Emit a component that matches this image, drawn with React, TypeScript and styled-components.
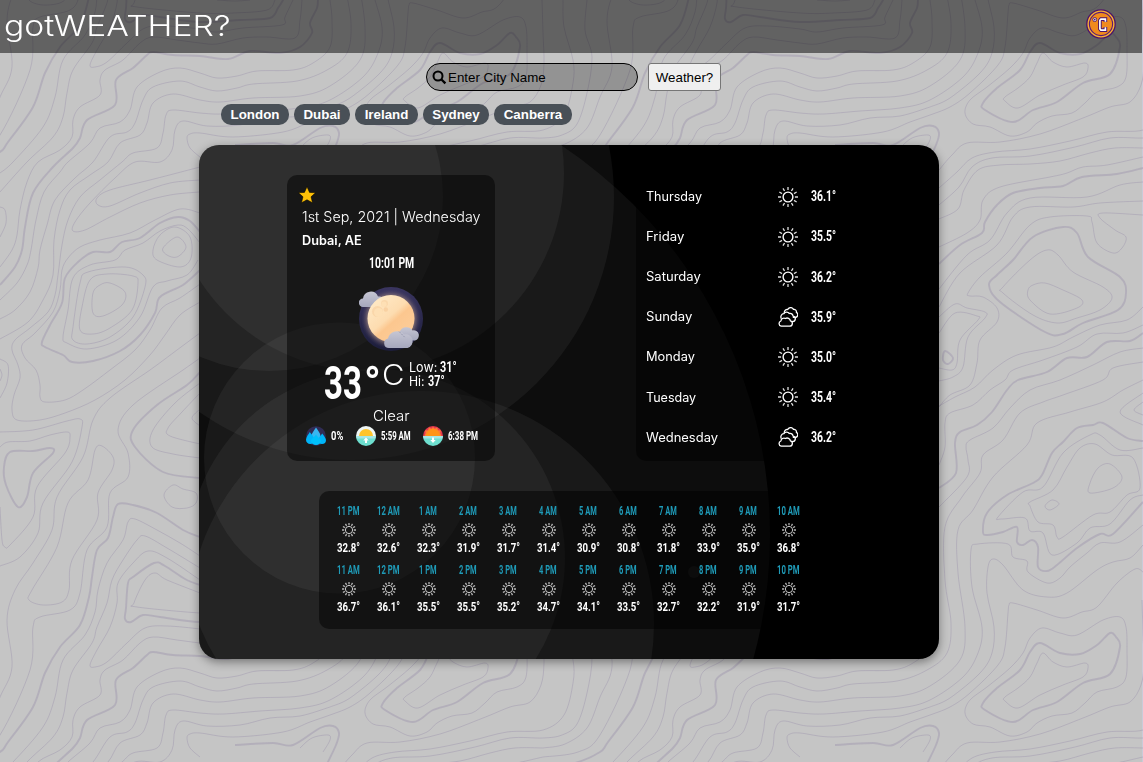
import React, { useLayoutEffect, useRef, useState } from "react";
import styled, { createGlobalStyle } from "styled-components";

const GlobalStyle = createGlobalStyle`
  * { box-sizing: border-box; }
  html, body { margin: 0; padding: 0; height: 100%; overflow: hidden; }
  body { background: #c5c5c5; font-family: "Liberation Sans", Arial, sans-serif; }
`;

/* ---------- topographic backdrop ---------- */

type Contour = { d: string; closed?: boolean; bold?: boolean };

const smooth = (points: string, closed?: boolean) => {
  const p = points.trim().split(/\s+/).map((s) => s.split(",").map(Number));
  const n = p.length;
  const at = (i: number) => (closed ? p[(i + n) % n] : p[Math.max(0, Math.min(n - 1, i))]);
  let d = `M${p[0][0]} ${p[0][1]}`;
  for (let i = 0; i < (closed ? n : n - 1); i++) {
    const [a, b, c, e] = [at(i - 1), at(i), at(i + 1), at(i + 2)];
    const f = (v: number) => v.toFixed(1);
    d += `C${f(b[0] + (c[0] - a[0]) / 6)} ${f(b[1] + (c[1] - a[1]) / 6)} ${f(c[0] - (e[0] - b[0]) / 6)} ${f(c[1] - (e[1] - b[1]) / 6)} ${c[0]} ${c[1]}`;
  }
  return closed ? d + "Z" : d;
};

const contours: Contour[] = [
  { bold: true, d: "200,-15 185,-21 165,-34 154,-37 133,-23 128,-17 126,8 125,19 131,22 143,15 160,17 200,22 240,20 270,18 278,8 283,0 287,-10" },
  { bold: true, d: "320,-10 318,0 317,8 310,23 312,33 300,47 280,53 250,51 228,59 200,56 173,55 153,52 147,55 133,68 116,80 115,105 87,120 80,138 73,148 53,167 33,193 25,227 22,250 15,267 0,285" },
  { bold: true, d: "-57,168 -25,163 0,152 8,142 33,107 45,73 60,47 80,25 89,-3 92,-23 97,-50 108,-62 113,-83 118,-96 133,-95 157,-87 183,-70 200,-63" },
  { bold: true, closed: true, d: "440,43 430,52 420,70 397,88 383,103 385,110 413,122 433,110 457,102 483,83 510,74 520,47 516,37 510,33 497,45 480,54 460,53" },
  { closed: true, d: "443,53 437,63 430,77 418,88 405,97 405,101 418,108 440,95 463,85 483,77 488,68 485,63 467,67 453,62" },
  { closed: true, d: "520,17 503,20 477,35 460,33 442,28 430,38 423,53 410,68 387,87 370,100 365,113 373,124 390,127 410,136 427,132 437,123 452,116 472,113 485,103 497,92 517,87 526,77 527,50 526,27" },
  { d: "200,157 190,148 187,138 190,134 200,133 233,137 283,132 310,122 330,115 350,107 370,93 398,65 405,47 408,13 409,5 413,3 437,10 463,18 482,12 497,7 517,-17 535,-31 543,-28" },
  { d: "330,107 350,98 380,73 392,53 394,27 387,-7 388,-33 393,-41 403,-35 423,-10 447,-3 467,-7 497,-30 513,-38 530,-42 543,-55" },
  { d: "330,107 300,116 270,118 240,125 207,126 183,121 175,130 172,150 160,162 135,162 115,178 90,203 75,222 73,231 85,230 110,217 140,203 170,195 199,192" },
  { d: "543,-75 520,-58 500,-57 487,-47 470,-33 460,-22 447,-17 428,-28 427,-39 413,-43 408,-56 378,-56 371,-50 372,-13 382,27 378,53 363,77 330,100 300,108 260,111 223,114 200,113 173,110 166,115 163,133 157,148 133,153 122,162 100,180 80,197 68,220 62,245 58,275 55,295 48,312 30,328 15,340 12,350 18,365 20,378 14,395 12,410 17,420 40,420 65,413 95,400 125,380 150,355 165,335 180,315 200,302" },
  { d: "543,-220 523,-210 503,-198 470,-188 437,-177 427,-155 393,-123 373,-90 358,-70 358,-27 365,27 360,60 330,86 300,96 253,98 220,102 200,100 173,94 153,103 147,123 140,135 120,143 108,162 90,175 70,190 60,210 54,240 53,275 43,300 28,322 0,339" },
  { d: "543,-238 513,-232 503,-220 463,-205 443,-198 420,-187 403,-160 383,-145 380,-127 362,-103 345,-73 345,-20 351,23 347,53 327,70 297,81 253,84 237,88 217,91 200,87 180,81 153,87 143,100 135,123 127,132 110,137 93,162 75,178 55,200 47,225 40,250 38,268 30,292 15,310 0,319" },
  { d: "330,0 332,20 330,47 313,63 293,70 257,71 237,76 217,78 200,73 180,68 160,72 137,87 130,110 120,122 100,128 90,143 68,162 60,172 44,192 36,220 31,250 27,265 17,283 0,300" },
  { d: "302,0 300,20 295,38 267,37 243,38 217,44 200,43 177,40 153,37 140,43 123,60 105,70 100,80 100,95 80,107 73,120 72,137 60,150 38,162 27,182 20,210 17,235 12,250 0,267" },
  { d: "293,0 285,17 282,25 243,28 217,32 200,29 167,26 145,28 127,43 107,62 95,67 90,65 97,50 110,27 117,3 118,-17 133,-37 148,-49 167,-42 200,-20" },
  { d: "200,-44 180,-57 157,-70 135,-81 128,-78 123,-60 107,-37 98,-10 95,12 85,35 63,60 55,97 43,127 13,162 0,173" },
  { d: "200,-32 167,-52 145,-64 137,-60 123,-40 112,-20 107,3 97,27 92,43 73,70 67,93 63,117 53,137 27,162 0,192" },
  { d: "275,0 267,10 233,13 200,13 137,7 134,3 145,-20 155,-27 167,-20 200,-7" },
  { d: "217,0 235,1 250,0" },
  { d: "200,333 173,353 150,370 110,398 93,420 83,457 57,497 52,530 33,563 15,590 7,620 12,667 0,697 -13,728 -35,744 -57,748" },
  { d: "200,358 183,370 133,405 118,430 128,453 128,477 110,493 107,527 87,550 80,593 70,610 40,617 33,627 30,670 0,735 -22,752 -57,757" },
  { closed: true, d: "102,446 113,457 112,470 98,493 97,520 72,560 69,590 62,602 43,605 29,600 32,590 57,547 68,503 88,480 95,450" },
  { d: "0,447 8,442 30,441 50,435 67,432 70,437 65,453 37,487 33,517 10,545 5,547 2,540 0,507" },
  { d: "0,432 33,430 67,421 80,419 82,427 72,462 43,503 38,533 20,557 0,566" },
  { bold: true, closed: true, d: "10,452 33,451 50,448 53,453 33,473 27,497 18,507 6,485 4,467" },
  { d: "0,359 8,365 7,383 0,398" },
  { d: "0,369 2,375 0,381" },
  { d: "0,207 5,210 6,223 0,237" },
  { bold: true, d: "200,232 190,221 178,217 160,223 140,238 122,242 110,252 93,252 78,262 65,278 62,303 50,325 42,342 45,347 63,355 72,362 93,361 120,351 140,335 155,313 160,297 183,285 200,270" },
  { d: "200,213 180,209 155,220 130,233 100,240 80,247 68,258 62,270 60,290 53,312 35,333 22,345 25,358 36,370 40,385 40,397 45,402 65,400 83,390 110,370 135,350 150,330 162,308 180,298 200,284" },
  { d: "200,243 188,229 178,225 160,231 143,243 125,250 115,260 90,265 73,278 68,310 63,337 67,343 87,349 117,340 140,317 153,287 167,281 187,275 198,260" },
  { closed: true, d: "125,267 143,275 145,287 133,317 110,337 87,344 73,340 73,327 80,283 88,272" },
  { closed: true, d: "133,276 138,283 132,310 110,328 93,334 80,330 82,307 90,280 107,274" },
  { closed: true, d: "110,283 125,292 122,305 103,316 93,313 93,293 100,285" },
  { closed: true, d: "177,237 186,247 177,257 167,255 163,248" },
  { closed: true, d: "175,227 190,237 191,258 180,267 157,260 153,250 160,235" },
  { d: "200,167 150,180 110,190 97,198 98,205 110,206 140,193 170,183 200,180" },
  { bold: true, d: "200,372 187,385 157,405 133,430 135,447 163,472 200,478" },
  { d: "200,383 175,403 153,430 152,447 173,454 200,458" },
  { d: "200,393 182,412 168,428 170,436 200,444" },
  { d: "200,409 192,418 200,426" },
  { closed: true, d: "173,485 183,489 196,493 196,503 187,508 172,507 164,495" },
  { bold: true, d: "235,145 273,143 293,145 320,128 333,126 339,133 336,145 325,168" },
  { d: "300,148 312,138 328,135 330,140 323,152" },
  { d: "542,0 543,33 544,63 541,85 530,102 510,107 483,118 440,134 400,142 367,143 352,155 339,170" },
  { d: "563,0 564,27 573,60 573,83 564,115 543,130 507,132 470,141 430,149 395,152 372,158 357,172 339,188" },
  { d: "587,0 585,30 592,57 587,93 577,124 562,135 543,138 510,138 475,147 430,156 392,158 372,167 359,187 339,205" },
  { d: "543,148 515,148 490,153 460,161 430,164 400,165 378,170 364,190 358,209 339,219" },
  { d: "543,157 507,165 483,167 467,173 450,177 400,187 383,200 380,220 367,233 339,247" },
  { bold: true, d: "543,168 517,174 482,177 463,186 440,188 413,193 397,205 385,222 382,233 360,245 339,264" },
  { d: "543,182 520,185 487,197 430,198 407,213 390,240 367,255 339,289" },
  { d: "543,201 500,203 473,207 430,207 413,217 397,245 360,273 339,307" },
  { d: "543,215 503,213 500,218 515,230 526,237 522,248 513,253 497,243 492,222 487,216 450,217 430,225 407,253 380,277 368,293 370,296 383,297 397,308 397,322 380,340 377,363 370,385 350,395 339,407" },
  { bold: true, closed: true, d: "463,227 477,233 488,257 520,277 526,293 518,310 483,323 463,334 445,332 400,302 389,285 397,275 413,260 433,237" },
  { closed: true, d: "447,250 458,255 473,272 503,287 512,298 500,310 477,318 457,323 433,315 403,293 403,287 430,260" },
  { closed: true, d: "445,283 463,290 482,300 477,308 450,314 430,300 428,290 433,285" },
  { d: "339,317 355,304 367,308 385,312 385,318 368,337 363,367 353,377 339,381" },
  { d: "339,333 355,313 377,316 378,320 360,340 357,363 352,370 339,368" },
  { bold: true, closed: true, d: "345,351 353,358 348,364 343,360" },
  { d: "543,307 527,320 500,325 473,337 453,347 417,355 393,370 375,387 355,397 339,406" },
  { d: "543,325 523,333 497,334 477,347 443,360 413,370 405,380 390,390 373,405 350,413 345,423 345,447 339,465" },
  { bold: true, d: "543,333 530,341 507,342 487,357 467,358 447,372 418,380 407,390 392,412 377,425 360,432 355,443 356,473 339,488" },
  { d: "543,348 520,352 493,365 460,380 430,390 410,408 393,428 370,440 366,447 368,460 367,477 339,507" },
  { bold: true, d: "543,441 527,438 503,423 493,425 477,428 463,442 452,453 442,475 433,483 407,495 387,513 383,532 388,535 403,532 417,527 417,542 423,545 432,540 438,547 438,567 447,571 457,565 477,548 500,534 513,534 543,502" },
  { d: "543,448 520,450 500,435 490,435 463,453 443,487 423,492 398,517 402,519 425,518 430,531 443,533 452,555 477,543 490,528 510,524 530,500 543,495" },
  { closed: true, d: "533,458 512,455 495,444 480,448 467,467 453,490 430,502 430,506 438,522 453,525 457,537 463,537 493,515 510,512 527,495 540,488" },
  { closed: true, d: "510,464 522,477 513,488 490,493 490,483 498,468" },
  { closed: true, d: "452,500 459,504 450,510 445,506" },
  { d: "543,393 520,412 543,425" },
  { d: "543,402 534,410 543,415" },
];

const BackdropSvg = styled.svg`
  position: absolute;
  inset: 0;
  z-index: -1;
`;

const Backdrop = () => (
  <BackdropSvg width="1143" height="762" fill="none" stroke="#9c92ac" strokeOpacity="0.42">
    <defs>
      <g id="contours">
        {contours.map((c, i) => (
          <path key={i} d={smooth(c.d, c.closed)} strokeWidth={c.bold ? 1.9 : 1} />
        ))}
      </g>
    </defs>
    {[0, 600].map((x) => [-600, 0, 600].map((y) => <use key={`${x}-${y}`} href="#contours" x={x} y={y} />))}
  </BackdropSvg>
);

/* ---------- text fitted to a set width ---------- */

const FitBox = styled.span<{ $w: number }>`
  display: inline-block;
  flex: none;
  width: ${(p) => p.$w}px;
  white-space: nowrap;
  text-align: left;
`;
const FitInner = styled.span`
  display: inline-block;
  transform-origin: 0 50%;
`;

const Fit = ({ w, children, className }: { w: number; children: React.ReactNode; className?: string }) => {
  const ref = useRef<HTMLSpanElement>(null);
  const [scale, setScale] = useState(1);
  useLayoutEffect(() => {
    if (ref.current) setScale(w / ref.current.offsetWidth);
  }, [w]);
  return (
    <FitBox $w={w} className={className}>
      <FitInner ref={ref} style={{ transform: `scaleX(${scale})` }}>{children}</FitInner>
    </FitBox>
  );
};

const Condensed = styled(Fit)<{ $size: number }>`
  font-family: Roboto, sans-serif;
  font-weight: 700;
  font-size: ${(p) => p.$size}px;
  line-height: 1.1;
`;
const Rounded = styled(Fit)<{ $size: number; $weight?: number }>`
  font-family: Inter, sans-serif;
  font-weight: ${(p) => p.$weight ?? 400};
  font-size: ${(p) => p.$size}px;
  line-height: 1.2;
`;

/* ---------- page ---------- */

const Page = styled.div`
  position: relative;
  z-index: 0;
  width: 100vw;
  height: 762px;
  border-right: 1px solid #c9cbd9;
`;
const Header = styled.header`
  display: flex;
  align-items: center;
  justify-content: space-between;
  height: 53px;
  padding: 0 26px 5px 4px;
  background: rgba(0, 0, 0, 0.5);
  color: #fff;
`;
const Brand = styled.div`
  display: flex;
  padding-top: 4px;
`;
const SearchRow = styled.form`
  display: flex;
  gap: 10px;
  margin: 10px 0 0 426px;
  height: 28px;
`;
const SearchBox = styled.label`
  display: flex;
  align-items: center;
  width: 212px;
  padding-left: 5px;
  border: 1px solid #000;
  border-radius: 14px;
  background: rgba(0, 0, 0, 0.25);
`;
const SearchInput = styled.input`
  width: 180px;
  padding: 0;
  margin-left: 1px;
  border: 0;
  outline: 0;
  background: transparent;
  font: 13.333px "Liberation Sans", Arial, sans-serif;
  &::placeholder { color: #000; opacity: 1; }
`;
const SearchButton = styled.button`
  width: 73px;
  padding: 0;
  border: 1px solid #767676;
  border-radius: 3px;
  background: #efefef;
  color: #000;
  font: 13.333px "Liberation Sans", Arial, sans-serif;
`;
const Chips = styled.div`
  display: flex;
  gap: 5px;
  margin: 13px 0 0 221px;
`;
const Chip = styled.button<{ $w: number }>`
  width: ${(p) => p.$w}px;
  height: 21px;
  padding: 0;
  border: 0;
  border-radius: 10px;
  background: #495057;
  color: #fff;
  font: bold 13.333px "Liberation Sans", Arial, sans-serif;
`;

const Card = styled.main`
  position: relative;
  z-index: 0;
  width: 740px;
  height: 514px;
  margin: 20px 0 0 199px;
  padding: 30px 88px;
  overflow: hidden;
  border-radius: 20px;
  background: #000;
  color: #fff;
`;
const CardShadow = styled.div`
  display: flow-root;
  filter: drop-shadow(0 3px 5px rgba(0, 0, 0, 0.4));
`;
const CardArt = styled.svg`
  position: absolute;
  inset: 0;
  z-index: -1;
`;
const TopPanels = styled.div`
  display: flex;
  justify-content: space-between;
`;
const Panel = styled.section`
  border-radius: 10px;
  background: rgba(0, 0, 0, 0.5);
`;
const Today = styled(Panel)`
  display: flex;
  flex-direction: column;
  width: 208px;
  height: 286px;
  padding: 11px 15px 0;
`;
const StarIcon = styled.svg`
  margin-left: -4px;
  flex: none;
`;
const Line = styled.div<{ $h: number; $center?: boolean }>`
  display: flex;
  align-items: center;
  justify-content: ${(p) => (p.$center ? "center" : "flex-start")};
  flex: none;
  height: ${(p) => p.$h}px;
`;
const MoonSlot = styled.div`
  display: flex;
  justify-content: center;
  margin-top: 9px;
`;
const TempRow = styled.div`
  display: flex;
  align-items: flex-start;
  height: 54px;
  padding: 7px 0 0 22px;
`;
const BigDegree = styled.div`
  display: flex;
  margin-left: 2px;
`;
const UnitLetter = styled.div`
  margin: 1px 0 0 1px;
`;
const Range = styled.div`
  display: flex;
  flex-direction: column;
  margin: 3px 0 0 5px;
`;
const RangeLine = styled.div`
  display: flex;
  align-items: center;
  gap: 3px;
  height: 14px;
`;
const Facts = styled.div`
  display: flex;
  align-items: center;
  height: 20px;
  margin: 0 -10px 0 4px;
`;
const Fact = styled.div<{ $w: number }>`
  display: flex;
  align-items: center;
  gap: 5px;
  width: ${(p) => p.$w}px;
`;
const Week = styled(Panel)`
  display: flex;
  flex-direction: column;
  width: 215px;
  height: 286px;
  padding: 1.5px 10px 0;
`;
const DayRow = styled.div`
  display: grid;
  grid-template-columns: 132px 33px 30px;
  align-items: center;
  height: 40.15px;
`;
const Hours = styled(Panel)`
  display: grid;
  grid-template-columns: repeat(12, 40px);
  grid-auto-rows: 59px;
  width: 500px;
  height: 138px;
  margin: 30px 0 0 32px;
  padding: 14px 10px 0 9px;
`;
const Hour = styled.div`
  display: flex;
  flex-direction: column;
  align-items: center;
`;
const HourLabel = styled.div`
  display: flex;
  height: 18px;
  color: #1f9bb8;
`;
const HourTemp = styled.div`
  display: flex;
  margin-top: 4px;
`;
const HourIcon = styled.div`
  display: flex;
  padding-left: 1px;
`;

/* ---------- icons ---------- */

const rays = (r1: number, r2: number) =>
  Array.from({ length: 12 }, (_, i) => {
    const a = (i * Math.PI) / 6;
    const f = (v: number) => (10 + v).toFixed(2);
    return `M${f(r1 * Math.cos(a))} ${f(r1 * Math.sin(a))}L${f(r2 * Math.cos(a))} ${f(r2 * Math.sin(a))}`;
  }).join("");

const Sun = ({ size }: { size: number }) => (
  <svg width={size} height={size} viewBox="0 0 20 20" fill="none" stroke="#fff">
    <circle cx="10" cy="10" r={size < 20 ? 5.2 : 4.9} strokeWidth="1.4" opacity={size < 20 ? 0.8 : 1} />
    <path d={rays(6.9, 10)} strokeWidth={size < 20 ? 1.8 : 1.35} opacity={size < 20 ? 0.7 : 0.85} />
  </svg>
);

const Clouds = () => (
  <svg width="20" height="20" viewBox="0 0 20 20" fill="none" stroke="#fff" strokeWidth="1.3" strokeLinejoin="round" strokeLinecap="round">
    <path d="M3.2 19.2H11.600a2.700 2.700 0 0 0 .8-5.3 3.300 3.300 0 0 0-5-2.400 3.100 3.100 0 0 0-4.500 2.500A2.700 2.700 0 0 0 3.200 19.200Z" />
    <path d="M3.100 11.300a3.300 3.300 0 0 1 2.800-4.600 3.300 3.300 0 0 1 5.400-.2 2.800 2.800 0 0 1 3.700 2.600 2.700 2.700 0 0 1-.8 5.400" />
    <path d="M6.300 5.600A3 3 0 0 1 9.700 2.500a3.200 3.200 0 0 1 5.800-.1 2.500 2.500 0 0 1 2.900 3 2.600 2.600 0 0 1-1.300 4.900H15.300" />
  </svg>
);

const Unit = () => (
  <svg width="30" height="30" viewBox="0 0 30 30">
    <circle cx="15" cy="15" r="14.200" fill="#f9b233" stroke="#4b1469" strokeWidth="1.300" />
    <circle cx="15" cy="15" r="11.600" fill="#f08a1d" stroke="#5b1a74" strokeWidth="1.100" />
    <circle cx="8.700" cy="10.600" r="1.200" fill="none" stroke="#4b1469" strokeWidth="2.200" />
    <circle cx="8.700" cy="10.600" r="1.200" fill="none" stroke="#fff" strokeWidth=".8" />
    <path d="M19.400 13V10.100H14.900L13.900 11.300V19.900L14.900 21.100H19.400V18" fill="none" stroke="#4b1469" strokeWidth="3.600" />
    <path d="M19.400 12.800V10.100H14.900L13.900 11.300V19.900L14.900 21.100H19.400V18.200" fill="none" stroke="#fff" strokeWidth="1.700" />
  </svg>
);

const Moon = () => (
  <svg width="64" height="64" viewBox="0 0 64 64">
    <defs>
      <linearGradient id="night" x1="0" y1="0" x2="0" y2="1"><stop offset="0" stopColor="#3a3560" /><stop offset="1" stopColor="#1c1d3b" /></linearGradient>
      <radialGradient id="halo"><stop offset=".74" stopColor="#c8a890" stopOpacity=".65" /><stop offset="1" stopColor="#4a4266" stopOpacity="0" /></radialGradient>
      <linearGradient id="face" x1=".15" y1=".1" x2=".85" y2=".9"><stop offset="0" stopColor="#ffe9c5" /><stop offset=".45" stopColor="#fddcb0" /><stop offset=".58" stopColor="#fcc78f" /><stop offset="1" stopColor="#fdcd99" /></linearGradient>
      <linearGradient id="mist" x1="0" y1="0" x2="0" y2="1"><stop offset="0" stopColor="#c6c6d3" /><stop offset="1" stopColor="#a5a7bd" /></linearGradient>
    </defs>
    <circle cx="32" cy="32" r="32" fill="url(#night)" />
    <circle cx="32" cy="32" r="30" fill="url(#halo)" />
    <path d="M4 20a4.200 4.200 0 0 1 0-8.400A7.800 7.800 0 0 1 19 9.500 5.500 5.500 0 0 1 22 20Z" fill="url(#mist)" />
    <circle cx="32" cy="31.500" r="23.500" fill="url(#face)" />
    <circle cx="18.500" cy="24.500" r="5.500" fill="#f8cf9f" opacity=".65" />
    <circle cx="19.500" cy="25.500" r="4.500" fill="#fee0b5" />
    <circle cx="25.500" cy="16.500" r="3.400" fill="#f8cf9f" opacity=".65" />
    <circle cx="25" cy="17.300" r="2.700" fill="#fee0b5" />
    <circle cx="26.800" cy="22.500" r="2.200" fill="#f5c794" opacity=".6" />
    <path d="M42 53.500a5 5 0 0 1-1.500-8A7.200 7.200 0 0 1 53.500 43.500 5 5 0 0 1 56 53.500Z" fill="url(#mist)" />
    <path d="M30 61a4.800 4.800 0 0 1-1-9.500A9.200 9.200 0 0 1 45 47.500 6.800 6.800 0 0 1 48.500 61Z" fill="url(#mist)" />
    <path d="M40 44.500 46 50.500" stroke="#8d8fa8" strokeWidth=".8" strokeDasharray="2 1" />
  </svg>
);

const Rain = () => (
  <svg width="20" height="20" viewBox="0 0 20 20">
    <circle cx="10" cy="10" r="9.800" fill="#302c56" />
    <path d="M10 1.500C12 4.500 14.500 7.200 14.500 10.500A4.500 4.500 0 0 1 5.500 10.500C5.500 7.200 8 4.500 10 1.500Z" fill="#38b6f0" />
    <path d="M3.800 6C5 8 8.500 11 8.500 13.800A4.200 4.200 0 0 1 0 13.800C0 11 2.800 8 3.800 6Z" fill="#00b4f8" />
    <path d="M16.300 7.500C17.500 9.500 20 12 20 14A4 4 0 0 1 12 14C12 12 15 9.500 16.300 7.500Z" fill="#00b4f8" />
    <path d="M10 8.500C11.500 11 15 13 15 15A5 4 0 0 1 5 15C5 13 8.500 11 10 8.500Z" fill="#00c0fb" />
  </svg>
);

const Horizon = ({ down }: { down?: boolean }) => (
  <svg width="20" height="20" viewBox="0 0 20 20">
    <path d="M0 10a10 10 0 0 1 20 0Z" fill={down ? "#e4384f" : "#eef6f5"} />
    {down && <path d="M1.500 10 2.600 7 2 4.500 5 4.200 6 1.500 8.500 2.800 10 .8 11.800 2.800 14.200 1.500 15 4.200 18 4.500 17.200 7 18.500 10Z" fill="#ff7a35" />}
    <path d="M3 10a7 7 0 0 1 14 0Z" fill={down ? "#ff9417" : "#ffc42c"} />
    <path d="M0 10a10 10 0 0 0 20 0Z" fill="#6edfcf" />
    <path d="M0 10H20L19.500 12.500H.5Z" fill="#a4e6e5" />
    <path d={down ? "M9 11.500H11V14H12.700L10 17 7.300 14H9Z" : "M9 17H11V14.500H12.700L10 11.500 7.300 14.500H9Z"} fill="#fff" />
  </svg>
);

/* ---------- data ---------- */

const cities: [string, number][] = [["London", 68], ["Dubai", 56], ["Ireland", 63], ["Sydney", 66], ["Canberra", 78]];

const days: [string, number, string, boolean?][] = [
  ["Thursday", 56, "36.1°"],
  ["Friday", 38, "35.5°"],
  ["Saturday", 55, "36.2°"],
  ["Sunday", 46, "35.9°", true],
  ["Monday", 49, "35.0°"],
  ["Tuesday", 50, "35.4°"],
  ["Wednesday", 72, "36.2°", true],
];

const hours: [string, string][] = [
  ["11 PM", "32.8°"], ["12 AM", "32.6°"], ["1 AM", "32.3°"], ["2 AM", "31.9°"], ["3 AM", "31.7°"], ["4 AM", "31.4°"],
  ["5 AM", "30.9°"], ["6 AM", "30.8°"], ["7 AM", "31.8°"], ["8 AM", "33.9°"], ["9 AM", "35.9°"], ["10 AM", "36.8°"],
  ["11 AM", "36.7°"], ["12 PM", "36.1°"], ["1 PM", "35.5°"], ["2 PM", "35.5°"], ["3 PM", "35.2°"], ["4 PM", "34.7°"],
  ["5 PM", "34.1°"], ["6 PM", "33.5°"], ["7 PM", "32.7°"], ["8 PM", "32.2°"], ["9 PM", "31.9°"], ["10 PM", "31.7°"],
];

const rings = [
  [70, 52, 174], [167, 28, 198], [152, 52, 263], [140.5, 313, 135.5],
  [177, 413, 189], [222, 479, 233], [103, 390, 468], [495, 427, 6],
];

export default function App() {
  return (
    <Page>
      <GlobalStyle />
      <Backdrop />
      <Header>
        <Brand><Rounded $size={29} $weight={300} w={226}>gotWEATHER?</Rounded></Brand>
        <Unit />
      </Header>
      <SearchRow>
        <SearchBox>
          <svg width="15" height="15" viewBox="0 0 15 15" fill="none" stroke="#000" strokeWidth="2">
            <circle cx="6" cy="6" r="4.500" />
            <path d="M9.200 9.200 13.400 13.400" strokeWidth="2.300" />
          </svg>
          <SearchInput placeholder="Enter City Name" />
        </SearchBox>
        <SearchButton type="button">Weather?</SearchButton>
      </SearchRow>
      <Chips>
        {cities.map(([name, w]) => <Chip key={name} $w={w}>{name}</Chip>)}
      </Chips>
      <CardShadow>
        <Card>
          <CardArt width="740" height="514" fill="#fff" fillOpacity="0.05">
            {rings.map(([x, y, r], i) => <circle key={i} cx={x} cy={y} r={r} />)}
          </CardArt>
          <TopPanels>
            <Today>
              <StarIcon width="18" height="18" viewBox="0 0 18 18">
                <path d="M9 .8 11.500 6.400 17.500 6.800 13 10.800 14.500 16.800 9 13.700 3.500 16.800 5 10.800 .5 6.800 6.500 6.400Z" fill="#ffc107" stroke="#000" strokeWidth=".5" />
              </StarIcon>
              <Line $h={26}><Rounded $size={14.5} $weight={300} w={179}>1st Sep, 2021 | Wednesday</Rounded></Line>
              <Line $h={20}><Rounded $size={12.5} $weight={600} w={60}>Dubai, AE</Rounded></Line>
              <Line $h={28} $center><Condensed $size={15.5} w={45}>10:01 PM</Condensed></Line>
              <MoonSlot><Moon /></MoonSlot>
              <TempRow>
                <Condensed $size={46} w={38}>33</Condensed>
                <BigDegree><Condensed $size={46} w={17}>°</Condensed></BigDegree>
                <UnitLetter><Rounded $size={28} $weight={300} w={22}>C</Rounded></UnitLetter>
                <Range>
                  <RangeLine><Rounded $size={13} w={28}>Low:</Rounded><Condensed $size={14} w={17}>31°</Condensed></RangeLine>
                  <RangeLine><Rounded $size={13} w={16}>Hi:</Rounded><Condensed $size={14} w={17}>37°</Condensed></RangeLine>
                </Range>
              </TempRow>
              <Line $h={21} $center><Rounded $size={14.5} $weight={300} w={37}>Clear</Rounded></Line>
              <Facts>
                <Fact $w={50}><Rain /><Condensed $size={12.5} w={12}>0%</Condensed></Fact>
                <Fact $w={67}><Horizon /><Condensed $size={12.5} w={30}>5:59 AM</Condensed></Fact>
                <Fact $w={60}><Horizon down /><Condensed $size={12.5} w={30}>6:38 PM</Condensed></Fact>
              </Facts>
            </Today>
            <Week>
              {days.map(([day, w, temp, cloudy]) => (
                <DayRow key={day}>
                  <Rounded $size={12.8} w={w}>{day}</Rounded>
                  {cloudy ? <Clouds /> : <Sun size={20} />}
                  <Condensed $size={15} w={25}>{temp}</Condensed>
                </DayRow>
              ))}
            </Week>
          </TopPanels>
          <Hours>
            {hours.map(([label, temp]) => (
              <Hour key={label}>
                <HourLabel><Condensed $size={12} w={label.length > 4 ? 22.5 : 17.5}>{label}</Condensed></HourLabel>
                <HourIcon><Sun size={14} /></HourIcon>
                <HourTemp><Condensed $size={12.5} w={23}>{temp}</Condensed></HourTemp>
              </Hour>
            ))}
          </Hours>
        </Card>
      </CardShadow>
    </Page>
  );
}
